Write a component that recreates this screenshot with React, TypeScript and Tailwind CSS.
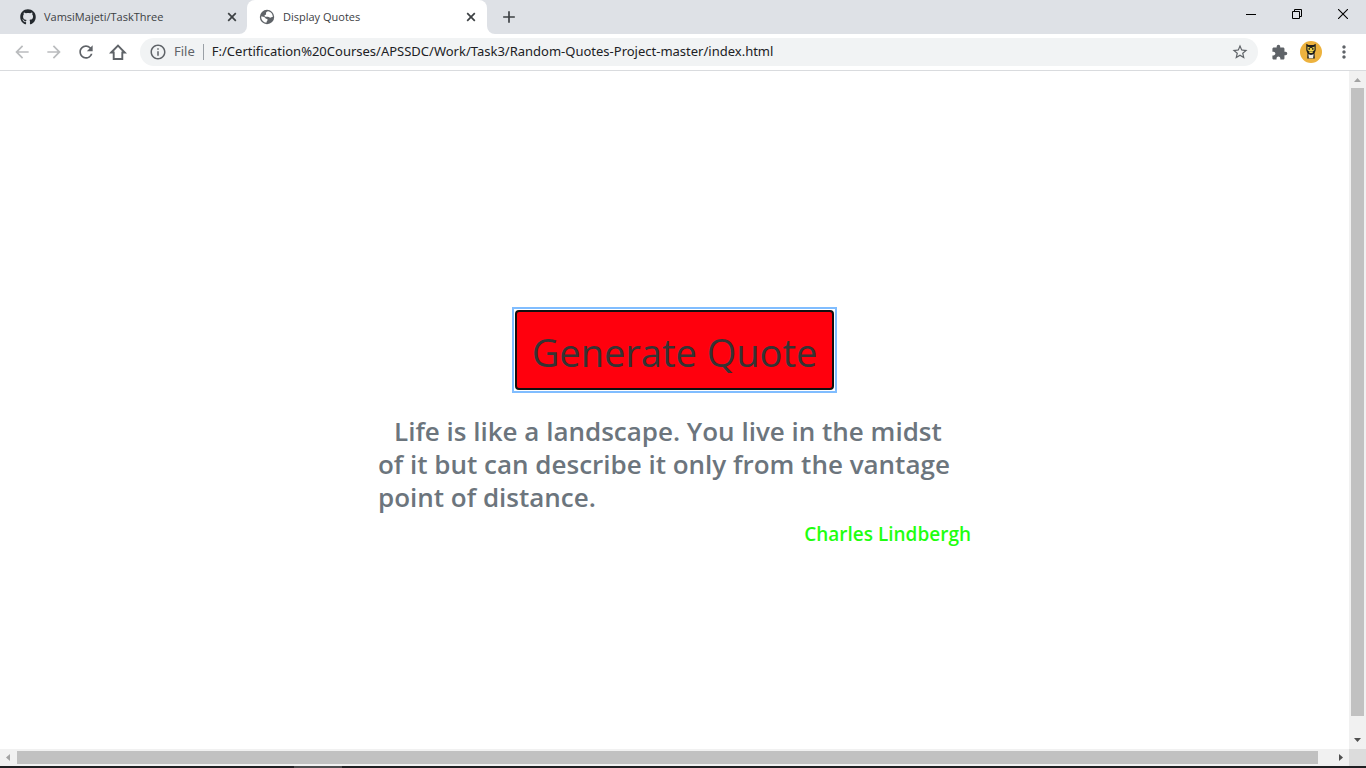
import React, { useState } from "react";
import { FaGithub } from "react-icons/fa";
import {
  MdAdd,
  MdArrowBack,
  MdArrowForward,
  MdExtension,
  MdInfoOutline,
  MdMoreVert,
  MdRefresh,
  MdStarBorder,
} from "react-icons/md";

const ADDRESS =
  "F:/Certification%20Courses/APSSDC/Work/Task3/Random-Quotes-Project-master/index.html";

function GlobeIcon() {
  return (
    <svg width="16" height="16" viewBox="0 0 16 16" aria-hidden="true">
      <circle cx="8" cy="8" r="7.2" fill="#5f6368" />
      <path
        d="M9.200 2.300C7.800 2.600 7 3.200 7 4.100c0 .9.300 1 0 1.500-.4.500-1.500.4-1.500 1.200 0 .8.700 1 1.700 1h1.700c1.200 0 1.500.9 2.400.9 1 0 1.200-.6 2.500-.6A6 6 0 0 0 9.200 2.300Z"
        fill="#fff"
      />
      <path
        d="M2.100 7.600c1.300-.1 2.400 0 3.500.6 1 .6.700 1.300 1.700 1.500 1 .2 1.400.5 1.300 1.300-.1.900-1 .9-1.200 2.700A6 6 0 0 1 2.100 7.600Z"
        fill="#fff"
      />
    </svg>
  );
}

function HomeIcon() {
  return (
    <svg width="18" height="18" viewBox="0 0 18 18" aria-hidden="true">
      <path
        d="M2.200 9.500 9 2.600l6.800 6.900h-2.500v6.500H4.700V9.500Z"
        fill="none"
        stroke="#5f6368"
        strokeWidth="1.900"
      />
    </svg>
  );
}

function TabCloseIcon() {
  return (
    <svg width="14" height="14" viewBox="0 0 14 14" aria-hidden="true">
      <path d="M3.200 3.200l7.600 7.600M10.800 3.200l-7.600 7.600" stroke="#3c4043" strokeWidth="1.700" />
    </svg>
  );
}

function Avatar() {
  return (
    <svg width="22" height="22" viewBox="0 0 22 22" aria-hidden="true">
      <circle cx="11" cy="11" r="11" fill="#edb23e" />
      <path d="M6.300 2.800l2.200 1.200h5l2.200-1.200v6.400l-1.200 3.200.3 5.100H7.200l.3-5.100-1.200-3.200Z" fill="#1d1d1b" />
      <path d="M7.500 5.500l3.500 1.800 3.500-1.800v3.500l-1.500 1.200h-4L7.500 9Z" fill="#f6d94f" />
      <circle cx="9.200" cy="7.900" r=".9" fill="#1d1d1b" />
      <circle cx="12.800" cy="7.900" r=".9" fill="#1d1d1b" />
      <path d="M9 10.500h4l-.5 1.500h-3Z" fill="#f6d94f" />
      <path d="M8.300 13.200l2.700.8 2.700-.8-.6 4H8.900Z" fill="#f1efe6" />
    </svg>
  );
}

function TabStrip() {
  return (
    <header className="flex h-[34px] shrink-0 bg-[#dee1e6] text-[11px] text-[#3c4043]">
      <div className="flex w-[247px] items-center bg-white">
        <div className="flex h-full w-full items-center rounded-br-lg bg-[#dee1e6] pr-2 pl-5">
          <FaGithub size={16} color="#24292e" />
          <span className="ml-2 grow">VamsiMajeti/TaskThree</span>
          <button aria-label="Close VamsiMajeti/TaskThree">
            <TabCloseIcon />
          </button>
        </div>
      </div>
      <div className="flex w-[240px] bg-[#dee1e6]">
        <div className="flex w-full items-center rounded-t-lg bg-white pr-[9px] pl-3">
          <GlobeIcon />
          <span className="ml-2 grow">Display Quotes</span>
          <button aria-label="Close Display Quotes">
            <TabCloseIcon />
          </button>
        </div>
      </div>
      <div className="flex grow bg-white">
        <div className="flex grow items-center rounded-bl-lg bg-[#dee1e6] pl-3">
          <button aria-label="New tab">
            <MdAdd size={20} />
          </button>
          <div className="ml-auto flex h-[34px] pb-[6px] text-black">
            <button aria-label="Minimize" className="flex w-[46px] items-center justify-center">
              <svg width="10" height="10" viewBox="0 0 10 10">
                <path d="M0 5.500h10" stroke="currentColor" />
              </svg>
            </button>
            <button aria-label="Restore" className="flex w-[46px] items-center justify-center">
              <svg width="10" height="10" viewBox="0 0 10 10" fill="none" stroke="currentColor">
                <path d="M.5 2.500h7v7h-7zM2.500 2.500v-2h7v7h-2" />
              </svg>
            </button>
            <button aria-label="Close window" className="flex w-[46px] items-center justify-center">
              <svg width="10" height="10" viewBox="0 0 10 10" stroke="currentColor">
                <path d="M0 0l10 10M10 0L0 10" strokeWidth="1.100" />
              </svg>
            </button>
          </div>
        </div>
      </div>
    </header>
  );
}

function Toolbar() {
  return (
    <nav className="flex h-[37px] shrink-0 items-center border-b border-[#d9dbde] bg-white text-[#5f6368]">
      <div className="flex items-center gap-3 pl-3">
        <button aria-label="Back" className="text-[#babcbe]">
          <MdArrowBack size={20} />
        </button>
        <button aria-label="Forward" className="text-[#babcbe]">
          <MdArrowForward size={20} />
        </button>
        <button aria-label="Reload">
          <MdRefresh size={20} />
        </button>
        <button aria-label="Home" className="flex w-5 justify-center">
          <HomeIcon />
        </button>
      </div>
      <div className="ml-3 flex h-7 grow items-center rounded-full bg-[#f1f3f4] px-[9px] font-['Noto_Sans',sans-serif] text-[13px]">
        <MdInfoOutline size={18} />
        <span className="ml-[7px]">File</span>
        <span className="mx-2 h-4 w-px bg-[#9aa0a6]" />
        <input
          aria-label="Address"
          defaultValue={ADDRESS}
          className="min-w-0 grow bg-transparent text-[#202124] outline-none"
        />
        <button aria-label="Bookmark this page">
          <MdStarBorder size={18} />
        </button>
      </div>
      <div className="flex items-center gap-3 pr-3 pl-[13px]">
        <button aria-label="Extensions">
          <MdExtension size={17} />
        </button>
        <button aria-label="Profile">
          <Avatar />
        </button>
        <button aria-label="Menu">
          <MdMoreVert size={20} />
        </button>
      </div>
    </nav>
  );
}

function VerticalScrollbar() {
  return (
    <div className="flex w-[17px] shrink-0 flex-col items-center bg-[#f1f1f1]">
      <svg width="17" height="17" viewBox="0 0 17 17">
        <path d="M5 11h7L8.500 7Z" fill="#a3a3a3" />
      </svg>
      <div className="w-[13px] grow bg-[#c1c1c1]" />
      <div className="h-4" />
      <svg width="17" height="17" viewBox="0 0 17 17">
        <path d="M5 6h7L8.500 10Z" fill="#505050" />
      </svg>
    </div>
  );
}

function HorizontalScrollbar() {
  return (
    <div className="flex h-[17px] shrink-0 items-center bg-[#f1f1f1]">
      <svg width="17" height="17" viewBox="0 0 17 17">
        <path d="M10 5v7L6 8.500Z" fill="#a3a3a3" />
      </svg>
      <div className="h-[13px] grow bg-[#c1c1c1]" />
      <div className="w-[14px]" />
      <svg width="17" height="17" viewBox="0 0 17 17">
        <path d="M7 5v7l4-3.500Z" fill="#505050" />
      </svg>
      <div className="h-full w-[17px] bg-[#dcdcdc]" />
    </div>
  );
}

const QUOTES = [
  {
    text: "Life is like a landscape. You live in the midst of it but can describe it only from the vantage point of distance.",
    author: "Charles Lindbergh",
  },
];

export default function App() {
  const [index, setIndex] = useState(0);
  const quote = QUOTES[index];
  return (
    <div className="flex h-screen flex-col bg-white font-['Segoe_UI','Open_Sans',sans-serif]">
      <TabStrip />
      <Toolbar />
      <div className="flex min-h-0 grow">
        <main className="flex grow flex-col items-center justify-center pt-8">
          <div className="flex border-2 border-[#80bdff] p-px">
            <button
              onClick={() => setIndex((index + 1) % QUOTES.length)}
              className="rounded-sm border-2 border-[#101010] bg-[#ff000d] px-[15px] pt-[10px] pb-[6px] text-[38px] leading-[60px] text-[#343434] outline-none"
            >
              Generate Quote
            </button>
          </div>
          <figure className="mt-[22px] w-[593px]">
            <blockquote className="indent-4 text-[26px] leading-[33px] font-semibold text-[#6c757d]">
              {quote.text}
            </blockquote>
            <figcaption className="mt-2 text-right text-[19px] leading-6 font-semibold text-[#1fff0f]">
              {quote.author}
            </figcaption>
          </figure>
        </main>
        <VerticalScrollbar />
      </div>
      <HorizontalScrollbar />
      <footer className="flex h-[2px] shrink-0 bg-[#1f1f22]">
        <div className="ml-[294px] w-12 bg-[#4c4c4e]" />
      </footer>
    </div>
  );
}
